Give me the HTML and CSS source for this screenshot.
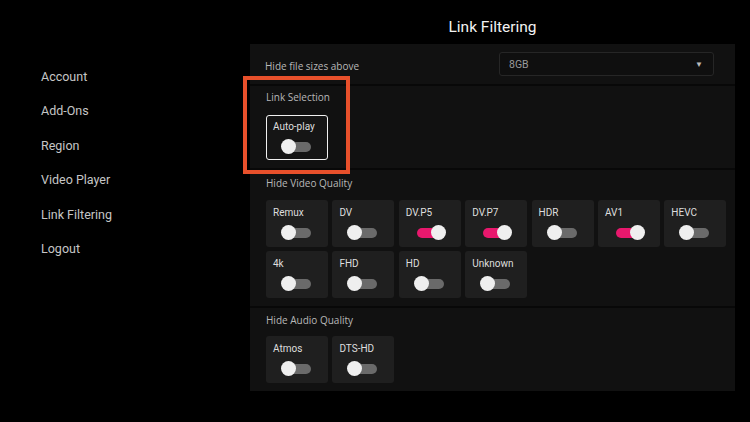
FILE: index.html
```html
<!DOCTYPE html>
<html lang="en">
<head>
    <meta charset="UTF-8">
    <meta name="viewport" content="width=device-width, initial-scale=1.0">
    <title>Link Filtering</title>
    <link rel="stylesheet" href="styles.css">
</head>
<body>
    <div class="app">
        <nav class="sidebar">
            <a>Account</a>
            <a>Add-Ons</a>
            <a>Region</a>
            <a>Video Player</a>
            <a>Link Filtering</a>
            <a>Logout</a>
        </nav>

        <main class="main">
            <h1 class="title">Link Filtering</h1>

            <div class="panel">
                <div class="row-size">
                    <span class="label">Hide file sizes above</span>
                    <div class="select">
                        <span>8GB</span>
                        <span class="arrow">&#9660;</span>
                    </div>
                </div>

                <section class="section selection">
                    <div class="label">Link Selection</div>
                    <div class="cards">
                        <div class="card focused">
                            <span>Auto-play</span>
                            <div class="toggle"></div>
                        </div>
                    </div>
                    <div class="highlight"></div>
                </section>

                <section class="section">
                    <div class="label">Hide Video Quality</div>
                    <div class="cards">
                        <div class="card"><span>Remux</span><div class="toggle"></div></div>
                        <div class="card"><span>DV</span><div class="toggle"></div></div>
                        <div class="card"><span>DV.P5</span><div class="toggle on"></div></div>
                        <div class="card"><span>DV.P7</span><div class="toggle on"></div></div>
                        <div class="card"><span>HDR</span><div class="toggle"></div></div>
                        <div class="card"><span>AV1</span><div class="toggle on"></div></div>
                        <div class="card"><span>HEVC</span><div class="toggle"></div></div>
                        <div class="card"><span>4k</span><div class="toggle"></div></div>
                        <div class="card"><span>FHD</span><div class="toggle"></div></div>
                        <div class="card"><span>HD</span><div class="toggle"></div></div>
                        <div class="card"><span>Unknown</span><div class="toggle"></div></div>
                    </div>
                </section>

                <section class="section last">
                    <div class="label">Hide Audio Quality</div>
                    <div class="cards">
                        <div class="card"><span>Atmos</span><div class="toggle"></div></div>
                        <div class="card"><span>DTS-HD</span><div class="toggle"></div></div>
                    </div>
                </section>
            </div>
        </main>
    </div>
</body>
</html>
```

FILE: styles.css
```css
body {
    margin: 0;
    background-color: #000;
    font-family: Roboto, "Liberation Sans", sans-serif;
    color: #ddd;
}

.app {
    display: flex;
    width: 750px;
    height: 422px;
    overflow: hidden;
}

/* left menu */
.sidebar {
    width: 250px;
    padding-top: 60px;
    display: flex;
    flex-direction: column;
}

.sidebar a {
    padding-left: 41px;
    height: 34.4px;
    line-height: 34.4px;
    font-size: 12.5px;
    color: #c6c6c6;
}

.main {
    width: 485px;
}

.title {
    margin: 0;
    height: 44px;
    line-height: 54px;
    text-align: center;
    font-size: 15.5px;
    font-weight: 400;
    color: #f2f2f2;
}

.panel {
    background-color: #111;
}

.label {
    font-family: "Open Sans", sans-serif;
    font-size: 10px;
    color: #b8b8b8;
}

.row-size {
    display: flex;
    align-items: center;
    justify-content: space-between;
    height: 40px;
    padding: 0 21px 0 15px;
    border-bottom: 2px solid #080808;
}

.row-size .label {
    padding-top: 4px;
}

.select {
    width: 194px;
    height: 22px;
    display: flex;
    align-items: center;
    justify-content: space-between;
    padding: 0 10px 0 9px;
    background-color: #0f0f0f;
    border: 1px solid #262626;
    border-radius: 3px;
    font-size: 10.5px;
    color: #9a9a9a;
}

.arrow {
    font-size: 8px;
    color: #bbb;
}

.section {
    position: relative;
    padding: 6px 0 8px 16px;
    border-bottom: 2px solid #080808;
}

.section.last {
    border-bottom: none;
    padding-top: 5px;
    padding-bottom: 8px;
}

.section .label {
    height: 14px;
    line-height: 14px;
    margin-bottom: 10px;
}

.selection {
    padding-top: 4px;
    padding-bottom: 8px;
}

.selection .label {
    margin-bottom: 11px;
}

.last .label {
    margin-bottom: 9px;
}

.cards {
    display: grid;
    grid-template-columns: repeat(7, 62px);
    column-gap: 4.4px;
    row-gap: 4px;
}

.card {
    position: relative;
    box-sizing: border-box;
    height: 47px;
    padding: 7px 0 0 7px;
    background-color: #1f1f1f;
    border-radius: 3px;
    font-size: 10px;
    color: #dedede;
}

.card.focused {
    height: 45px;
    padding: 5px 0 0 6px;
    background-color: #151515;
    border: 1.5px solid #f0f0f0;
}

.card span {
    display: block;
    line-height: 12px;
}

/* switch */
.toggle {
    position: relative;
    width: 32px;
    height: 15px;
    margin: 6px 0 0 8px;
}

.focused .toggle {
    margin-top: 6px;
}

.toggle::before {
    content: "";
    position: absolute;
    left: 3px;
    right: 2px;
    top: 2.5px;
    height: 10px;
    border-radius: 5px;
    background-color: #6a6a6a;
}

.toggle::after {
    content: "";
    position: absolute;
    left: 0;
    top: 0;
    width: 15px;
    height: 15px;
    border-radius: 50%;
    background-color: #efefef;
}

.toggle.on::before {
    background-color: #e8186d;
}

.toggle.on::after {
    left: auto;
    right: 0;
}

/* orange callout box */
.highlight {
    position: absolute;
    left: -7px;
    top: -10px;
    width: 99px;
    height: 90px;
    border: 4px solid #e8502b;
}
```
